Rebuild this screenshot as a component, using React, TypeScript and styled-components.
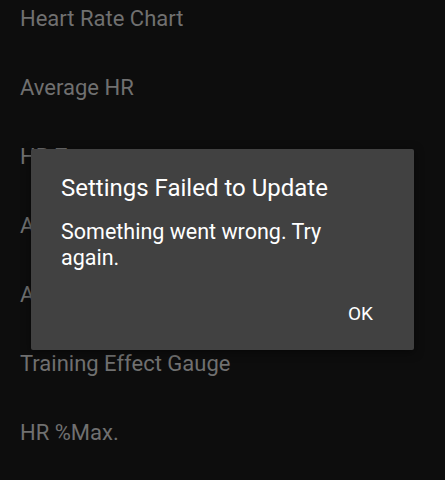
import React from "react";
import styled, { createGlobalStyle } from "styled-components";

const GlobalStyle = createGlobalStyle`
  html, body {
    margin: 0;
    padding: 0;
    background: #0d0d0d;
    font-family: Roboto, "Liberation Sans", sans-serif;
  }
`;

const Screen = styled.div`
  width: 445px;
  height: 480px;
  overflow: hidden;
  background: #0d0d0d;
  position: relative;
`;

const List = styled.ul`
  list-style: none;
  margin: 0;
  padding: 0 20px;
  margin-top: -16px;
`;

const Item = styled.li`
  height: 69px;
  display: flex;
  align-items: center;
  font-size: 22px;
  color: #707070;
`;

const Backdrop = styled.div`
  position: absolute;
  inset: 0;
  display: flex;
  justify-content: center;
  align-items: flex-start;
  padding-top: 149px;
`;

const Dialog = styled.div`
  width: 383px;
  height: 201px;
  box-sizing: border-box;
  background: #414141;
  border-radius: 2px;
  padding: 24px 30px 0;
  display: flex;
  flex-direction: column;
  box-shadow: 0 2px 10px rgba(0, 0, 0, 0.5);
`;

const Title = styled.h2`
  margin: 0;
  font-size: 24px;
  font-weight: 400;
  line-height: 30px;
  color: #ffffff;
`;

const Message = styled.p`
  margin: 16px 0 0;
  font-size: 21.5px;
  line-height: 26px;
  color: #ffffff;
  padding-right: 40px;
`;

const Actions = styled.div`
  margin-top: auto;
  display: flex;
  justify-content: flex-end;
  padding-bottom: 21px;
`;

const TextButton = styled.button`
  background: none;
  border: none;
  color: #ffffff;
  font-family: inherit;
  font-size: 19px;
  padding: 4px 11px;
  cursor: pointer;
`;

const items = [
  "Heart Rate Chart",
  "Average HR",
  "HR Zone",
  "Alerts",
  "Auto Pause",
  "Training Effect Gauge",
  "HR %Max.",
];

export default function App() {
  return (
    <Screen>
      <GlobalStyle />
      <List>
        {items.map((t) => (
          <Item key={t}>{t}</Item>
        ))}
      </List>
      <Backdrop>
        <Dialog>
          <Title>Settings Failed to Update</Title>
          <Message>Something went wrong. Try again.</Message>
          <Actions>
            <TextButton>OK</TextButton>
          </Actions>
        </Dialog>
      </Backdrop>
    </Screen>
  );
}
